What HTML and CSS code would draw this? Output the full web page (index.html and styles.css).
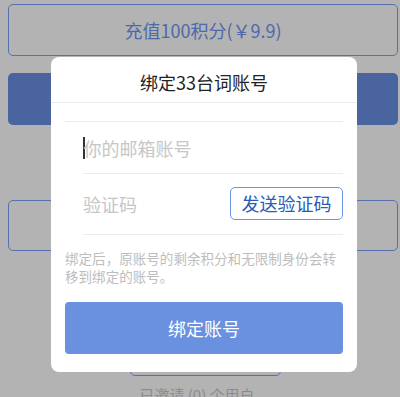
FILE: index.html
```html
<!DOCTYPE html>
<html lang="zh">
<head>
<meta charset="utf-8">
<link rel="stylesheet" href="styles.css">
</head>
<body>
<div class="page">
  <div class="btn-outline wide top">充值100积分(￥9.9)</div>
  <div class="btn-fill wide second"></div>
  <div class="btn-outline wide third"></div>
  <div class="btn-outline small"></div>
  <div class="invited">已邀请 (0) 个用户</div>
</div>

<div class="modal">
  <div class="modal-title">绑定33台词账号</div>
  <div class="modal-body">
    <div class="rule"></div>
    <div class="field email">
      <span class="caret"></span><span class="placeholder">你的邮箱账号</span>
    </div>
    <div class="field code">
      <span class="placeholder">验证码</span>
      <span class="send">发送验证码</span>
    </div>
    <p class="note">绑定后，原账号的剩余积分和无限制身份会转移到绑定的账号。</p>
    <div class="bind">绑定账号</div>
  </div>
</div>
</body>
</html>
```

FILE: styles.css
```css
html, body {
  margin: 0;
  padding: 0;
}
body {
  width: 400px;
  height: 397px;
  overflow: hidden;
  background: #b3b3b3;
  font-family: "Noto Sans CJK SC", "Noto Sans", sans-serif;
  position: relative;
}
.page {
  display: flex;
  flex-direction: column;
  align-items: center;
  padding: 4px 2px 0 8px;
}
.wide {
  align-self: stretch;
  box-sizing: border-box;
  border-radius: 5px;
}
.btn-outline {
  border: 1.5px solid #5670ad;
  box-sizing: border-box;
}
.top {
  height: 52px;
  display: flex;
  align-items: center;
  justify-content: center;
  color: #4d69ab;
  font-size: 18px;
}
.second {
  margin-top: 17px;
  height: 52px;
  background: #4a649f;
}
.btn-fill {
  border-radius: 5px;
}
.third {
  margin-top: 75px;
  height: 51px;
}
.small {
  margin-top: 20px;
  width: 151px;
  height: 105px;
  margin-left: -8px;
  margin-right: -12px;
  border-radius: 5px;
  transform: translateX(-0px);
}
.invited {
  margin-top: 8px;
  font-size: 15px;
  color: #8c8c8c;
  margin-left: -12px;
}

.modal {
  position: absolute;
  left: 51px;
  top: 57px;
  width: 306px;
  height: 315px;
  background: #fff;
  border-radius: 8px;
  box-sizing: border-box;
  overflow: hidden;
}
.modal-title {
  padding-top: 5px;
  height: 40px;
  line-height: 40px;
  text-align: center;
  font-size: 18px;
  color: #222;
  border-bottom: 1px solid #ececec;
}
.modal-body {
  padding: 18px 14px 0 14px;
  display: flex;
  flex-direction: column;
}
.rule {
  height: 1px;
  background: #ececec;
}
.field {
  margin-left: 18px;
  display: flex;
  align-items: center;
  border-bottom: 1px solid #ececec;
  font-size: 18px;
}
.email {
  height: 51px;
}
.code {
  height: 60px;
  justify-content: space-between;
}
.placeholder {
  color: #c6c6c6;
}
.caret {
  width: 1.5px;
  height: 22px;
  background: #333;
  margin-right: -1px;
}
.send {
  box-sizing: border-box;
  width: 113px;
  height: 33px;
  border: 1px solid #6c93e2;
  border-radius: 5px;
  color: #2c5cb6;
  display: flex;
  align-items: center;
  justify-content: center;
  font-size: 18px;
  margin-top: -2px;
}
.note {
  margin: 14px 0 0 0;
  font-size: 13.5px;
  line-height: 18px;
  color: #bdbdbd;
  letter-spacing: 0.05px;
}
.bind {
  margin-top: 17px;
  height: 52px;
  background: #6a90e0;
  border-radius: 4px;
  color: #fff;
  font-size: 18px;
  display: flex;
  align-items: center;
  justify-content: center;
}
```
